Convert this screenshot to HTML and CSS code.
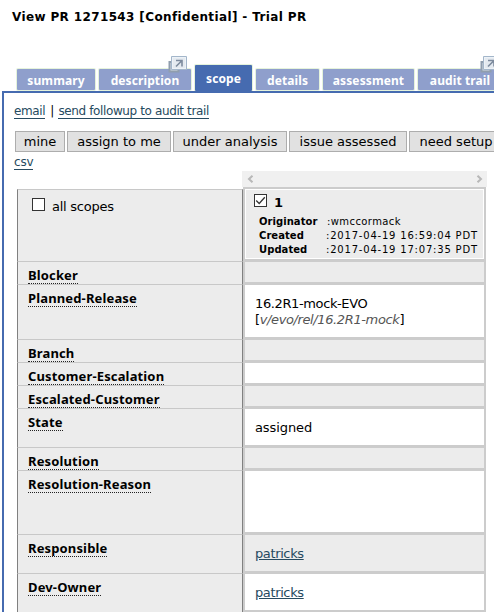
FILE: index.html
```html
<!DOCTYPE html>
<html lang="en">
<head>
<meta charset="utf-8">
<title>View PR 1271543</title>
<link rel="stylesheet" href="styles.css">
</head>
<body>
<h1>View PR 1271543 [Confidential] - Trial PR</h1>
<nav class="tabs">
  <a class="tab t-summary">summary</a>
  <a class="tab t-description">description
    <svg class="popout" viewBox="0 0 19 17"><path d="M5 6H1.500v9.500h9V13" fill="#d3dbe3" stroke="#909eae" stroke-width="2"/><path d="M3.500.5h15v13h-15z" fill="#edf2f7" stroke="#a3b6ca"/><path d="M5 2h12v10H5z" fill="#e4eaf0"/><path d="M8 4.500h6v6M13.500 5 8 10.500" fill="none" stroke="#7d8b9e" stroke-width="1.6"/></svg></a>
  <a class="tab active t-scope">scope</a>
  <a class="tab t-details">details</a>
  <a class="tab t-assessment">assessment</a>
  <a class="tab t-audit">audit trail
    <svg class="popout" viewBox="0 0 19 17"><path d="M5 6H1.500v9.500h9V13" fill="#d3dbe3" stroke="#909eae" stroke-width="2"/><path d="M3.500.5h15v13h-15z" fill="#edf2f7" stroke="#a3b6ca"/><path d="M5 2h12v10H5z" fill="#e4eaf0"/><path d="M8 4.500h6v6M13.500 5 8 10.500" fill="none" stroke="#7d8b9e" stroke-width="1.6"/></svg></a>
</nav>
<main class="panel">
  <div class="links"><a>email</a><span class="bar">|</span><a>send followup to audit trail</a></div>
  <div class="buttons">
    <button class="b-mine">mine</button><button class="b-assign">assign to me</button><button class="b-under">under analysis</button><button class="b-issue">issue assessed</button><button class="b-need">need setup</button>
  </div>
  <div class="csv"><a>csv</a></div>
  <div class="scroll">
    <svg viewBox="0 0 7 8"><path d="M5.500.7 2 4l3.500 3.300"/></svg>
    <svg viewBox="0 0 7 8"><path d="M1.500.7 5 4 1.500 7.300"/></svg>
  </div>
  <div class="grid">
    <div class="row head">
      <div class="name all"><i class="check"></i>all scopes</div>
      <div class="value info">
        <div class="pick"><i class="check"><svg viewBox="0 0 11 11"><path d="M1.200 5.500 4.200 8.500 9.800 2.300"/></svg></i><b>1</b></div>
        <dl><dt>Originator</dt><dd class="user">:wmccormack</dd><dt>Created</dt><dd>:2017-04-19 16:59:04 PDT</dd><dt>Updated</dt><dd>:2017-04-19 17:07:35 PDT</dd></dl>
      </div>
    </div>
    <div class="row"><div class="name"><span>Blocker</span></div><div class="value alt"></div></div>
    <div class="row release"><div class="name"><span>Planned-Release</span></div><div class="value"><p>16.2R1-mock-EVO</p><p class="path">[<em>v/evo/rel/16.2R1-mock</em>]</p></div></div>
    <div class="row"><div class="name"><span>Branch</span></div><div class="value alt"></div></div>
    <div class="row"><div class="name"><span>Customer-Escalation</span></div><div class="value"></div></div>
    <div class="row"><div class="name"><span>Escalated-Customer</span></div><div class="value alt"></div></div>
    <div class="row mid"><div class="name"><span>State</span></div><div class="value"><p class="state">assigned</p></div></div>
    <div class="row"><div class="name"><span>Resolution</span></div><div class="value alt"></div></div>
    <div class="row tall"><div class="name"><span>Resolution-Reason</span></div><div class="value"></div></div>
    <div class="row mid"><div class="name"><span>Responsible</span></div><div class="value alt"><p><a>patricks</a></p></div></div>
    <div class="row mid"><div class="name"><span>Dev-Owner</span></div><div class="value"><p><a>patricks</a></p></div></div>
  </div>
</main>
</body>
</html>
```
FILE: styles.css
```css
* { box-sizing: border-box; }
body { margin: 0; width: 494px; height: 612px; overflow: hidden; background: #fff; color: #000; font-family: "DejaVu Sans", sans-serif; font-size: 13px; }
h1 { margin: 0; height: 65px; padding: 9px 0 0 12px; font-size: 12px; line-height: 16px; letter-spacing: .37px; white-space: nowrap; }
a { color: #264a60; }
.tabs { display: flex; align-items: flex-end; gap: 4px; height: 26px; padding-left: 17px; }
.tab { position: relative; flex: none; height: 21px; margin-bottom: 1px; background: #8f9fcc; box-shadow: 0 0 0 1px #e5f3dc; border-radius: 1px; color: #fff; font: bold 12px/23px "Noto Sans", sans-serif; letter-spacing: .1px; text-align: center; white-space: nowrap; }
.tab.active { height: 26px; margin-bottom: 0; background: #466bb0; line-height: 28px; }
.t-summary { width: 78px; }
.t-description { width: 92px; }
.t-scope { width: 57px; }
.t-details { width: 63px; }
.t-assessment { width: 91px; }
.t-audit { width: 84px; }
.popout { position: absolute; right: 4px; top: -13px; width: 19px; height: 17px; }
.t-audit .popout { right: 3px; }
.panel { position: relative; margin-left: 2px; border-top: 2px solid #466bb0; border-left: 2px solid #466bb0; height: 521px; }
.links { height: 38px; padding: 10px 0 0 10px; font-size: 12px; line-height: 16px; letter-spacing: -.38px; white-space: nowrap; }
.links a, .csv a { border-bottom: 1px solid #264a60; line-height: 13px; display: inline-block; }
.bar { margin: 0 4.6px 0 5px; }
.buttons { display: flex; gap: 2px; padding-left: 11px; height: 21px; }
button { flex: none; height: 21px; border: 1px solid #adadad; background: #e1e1e1; padding: 0; color: #000; font: 13px/19px "DejaVu Sans", sans-serif; white-space: nowrap; }
.b-mine { width: 50px; }
.b-assign { width: 104px; }
.b-under { width: 114px; }
.b-issue { width: 118px; }
.b-need { width: 94px; }
.csv { height: 19px; padding: 3px 0 0 10px; font-size: 12px; line-height: 14px; letter-spacing: -.2px; }
.scroll { display: flex; justify-content: space-between; align-items: center; width: 245px; height: 16px; margin-left: 238px; padding: 0 4px 0 5px; background: #f0f0f0; }
.scroll svg { width: 7px; height: 8px; fill: none; stroke: #b8b8b8; stroke-width: 2; }
.grid { width: 469px; margin-left: 13px; }
.row { display: grid; grid-template-columns: 226px 243px; height: 23px; }
.row.head { height: 75px; }
.row.release { height: 55px; }
.row.mid { height: 39px; }
.row.tall { height: 64px; }
.name { background: #ececec; border: solid #808080; border-width: 0 1px; border-bottom: 1px solid #c8c8c8; padding: 5px 0 0 10px; font: bold 13px/16px "Noto Sans", sans-serif; letter-spacing: .14px; white-space: nowrap; }
.name span { display: inline-block; height: 17px; border-bottom: 1px dotted #222; }
.name.all { margin-top: 2px; border-top: 1px solid #c8c8c8; padding: 8px 0 0 14px; display: flex; font: 13px/18px "DejaVu Sans", sans-serif; letter-spacing: -.25px; }
.check { display: block; width: 13px; height: 13px; border: 1px solid #333; background: #fff; }
.check svg { display: block; width: 11px; height: 11px; fill: none; stroke: #333; stroke-width: 1.3; }
.all .check { margin-right: 7px; }
.value { background: #fff; border: solid #ccc; border-width: 0 2px 3px; padding: 11px 0 0 10px; line-height: 16px; letter-spacing: -.38px; white-space: nowrap; }
.value.alt { background: #ececec; }
.value p { margin: 0; }
.value .state { letter-spacing: -.1px; }
.value a { text-decoration: underline; text-underline-offset: 1px; }
.path em { color: #555; }
.value.info { background: #ececec; border-top: 2px solid #ccc; box-shadow: inset 0 0 0 1px #fff; padding: 5px 0 0 9px; letter-spacing: 0; }
.pick { display: flex; gap: 7px; height: 21px; }
.pick b { padding-top: 1px; }
dl { display: grid; grid-template-columns: 67px 1fr; margin: 0 0 0 5px; font-size: 10px; line-height: 14px; }
dt { font-weight: bold; letter-spacing: .05px; }
dd { margin: 0; letter-spacing: .8px; }
dd.user { letter-spacing: .4px; padding-left: 1px; }
```
